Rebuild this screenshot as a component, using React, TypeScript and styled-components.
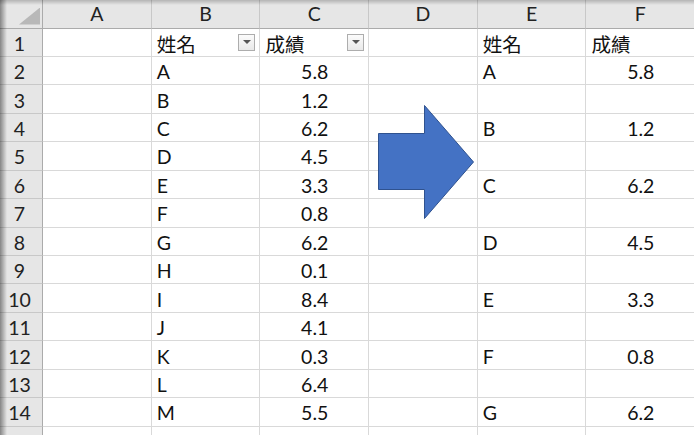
import React from "react";
import styled, { createGlobalStyle, css } from "styled-components";

const GlobalStyle = createGlobalStyle`
  html, body {
    margin: 0;
    padding: 0;
    background: #ffffff;
    overflow: hidden;
  }
`;

const COL_W = 108.7;
const HEAD_H = 28.5;
const ROW_H = 28.45;

const Sheet = styled.div`
  position: relative;
  width: 694px;
  height: 435px;
  overflow: hidden;
  font-family: Lato, "Noto Sans CJK TC", sans-serif;
  font-size: 19.5px;
  color: #111;

  /* edge shadow of the captured window */
  &::after {
    content: "";
    position: absolute;
    inset: 0;
    pointer-events: none;
    background: linear-gradient(to right, rgba(0, 0, 0, 0.42), rgba(0, 0, 0, 0) 7px),
      linear-gradient(to bottom, rgba(0, 0, 0, 0.22), rgba(0, 0, 0, 0) 5px);
  }
`;

const Grid = styled.div`
  display: grid;
  grid-template-columns: 43px repeat(6, ${COL_W}px);
  grid-template-rows: ${HEAD_H}px;
  grid-auto-rows: ${ROW_H}px;
`;

const HeadCell = styled.div<{ $corner?: boolean }>`
  background: #e6e6e6;
  border-right: 1px solid #c8c8c8;
  border-bottom: 1px solid #ababab;
  display: flex;
  align-items: center;
  justify-content: center;
  color: #222;
  position: relative;
  ${(p) =>
    p.$corner &&
    css`
      border-right-color: #ababab;
      &::before {
        content: "";
        position: absolute;
        right: 2px;
        bottom: 3px;
        width: 21px;
        height: 17px;
        background: #b8b8b8;
        clip-path: polygon(100% 0, 100% 100%, 0 100%);
      }
    `}
`;

const RowHead = styled.div`
  background: #e6e6e6;
  border-right: 1px solid #ababab;
  border-bottom: 1px solid #c8c8c8;
  display: flex;
  align-items: center;
  justify-content: center;
  padding-right: 3px;
  padding-top: 2px;
  color: #222;
`;

const Cell = styled.div<{ $align: "left" | "center" }>`
  border-right: 1px solid #d9d9d9;
  border-bottom: 1px solid #d9d9d9;
  display: flex;
  align-items: center;
  justify-content: ${(p) => (p.$align === "center" ? "center" : "space-between")};
  padding: 2px 4px 0 5px;
  white-space: nowrap;
  min-width: 0;
`;

const FilterButton = styled.span`
  width: 17px;
  height: 17px;
  box-sizing: border-box;
  border: 1px solid #adadad;
  background: linear-gradient(#fbfbfb, #e9e9e9);
  display: flex;
  align-items: center;
  justify-content: center;
  margin-top: -2px;

  &::after {
    content: "";
    border-left: 4px solid transparent;
    border-right: 4px solid transparent;
    border-top: 4px solid #555;
  }
`;

const Arrow = styled.svg`
  position: absolute;
  left: 377px;
  top: 104px;
`;

type Row = [string, string, string, string];

const left: [string, string][] = [
  ["姓名", "成績"],
  ["A", "5.8"],
  ["B", "1.2"],
  ["C", "6.2"],
  ["D", "4.5"],
  ["E", "3.3"],
  ["F", "0.8"],
  ["G", "6.2"],
  ["H", "0.1"],
  ["I", "8.4"],
  ["J", "4.1"],
  ["K", "0.3"],
  ["L", "6.4"],
  ["M", "5.5"],
  ["N", "9.9"],
];

const right: Record<number, [string, string]> = {
  0: ["姓名", "成績"],
  1: ["A", "5.8"],
  3: ["B", "1.2"],
  5: ["C", "6.2"],
  7: ["D", "4.5"],
  9: ["E", "3.3"],
  11: ["F", "0.8"],
  13: ["G", "6.2"],
};

const rows: Row[] = left.map(([n, s], i) => {
  const r = right[i] ?? ["", ""];
  return [n, s, r[0], r[1]];
});

const App = () => {
  return (
    <>
      <GlobalStyle />
      <Sheet>
        <Grid>
          <HeadCell $corner />
          {["A", "B", "C", "D", "E", "F"].map((c) => (
            <HeadCell key={c}>{c}</HeadCell>
          ))}
          {rows.map(([name, score, name2, score2], i) => {
            const header = i === 0;
            return (
              <React.Fragment key={i}>
                <RowHead>{i + 1}</RowHead>
                <Cell $align="left" />
                <Cell $align="left">
                  <span>{name}</span>
                  {header && <FilterButton />}
                </Cell>
                <Cell $align={header ? "left" : "center"}>
                  <span>{score}</span>
                  {header && <FilterButton />}
                </Cell>
                <Cell $align="left" />
                <Cell $align="left">
                  <span>{name2}</span>
                </Cell>
                <Cell $align={header ? "left" : "center"}>
                  <span>{score2}</span>
                </Cell>
              </React.Fragment>
            );
          })}
        </Grid>
        <Arrow width="100" height="118" viewBox="0 0 100 118">
          <polygon
            points="1.5,29.5 47.5,29.5 47.5,1.5 96.5,58 47.5,114.5 47.5,85.5 1.5,85.5"
            fill="#4472c4"
            stroke="#2f528f"
            strokeWidth="1"
          />
        </Arrow>
      </Sheet>
    </>
  );
};

export default App;
